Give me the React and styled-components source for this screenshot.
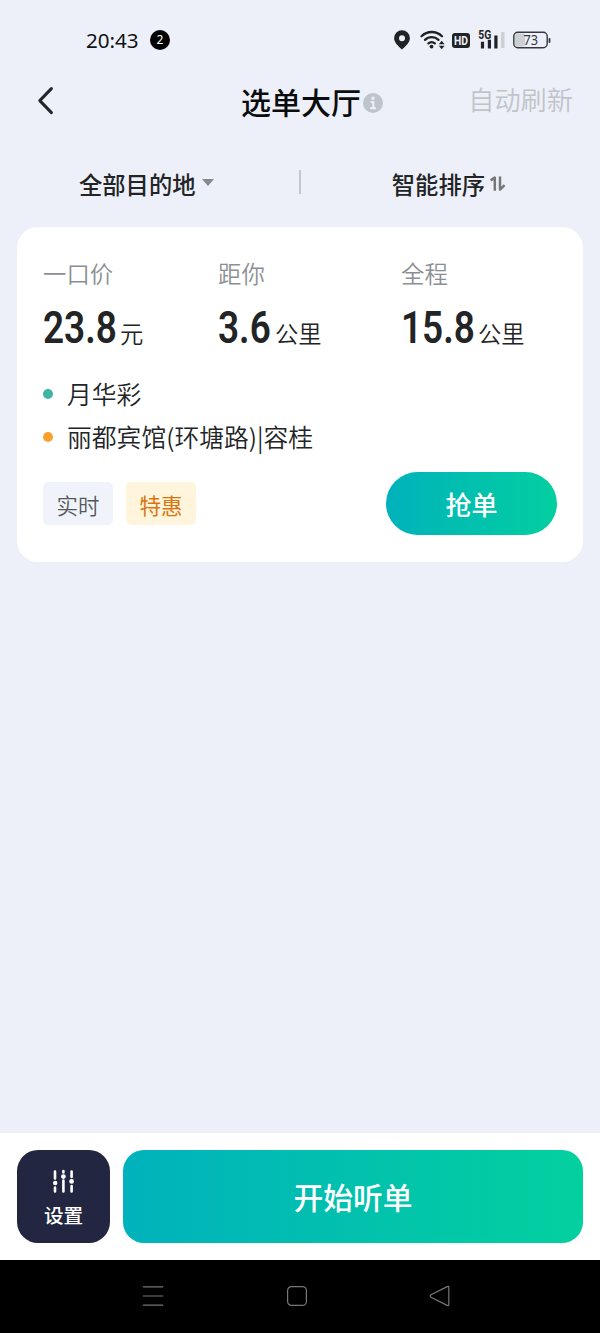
import React from "react";
import styled, { createGlobalStyle } from "styled-components";

const GlobalStyle = createGlobalStyle`
  * {
    box-sizing: border-box;
  }
  body {
    margin: 0;
    background: #edf0f9;
    font-family: "Noto Sans CJK SC", "Noto Sans", sans-serif;
    color: #222426;
  }
  button {
    border: none;
    padding: 0;
    font-family: inherit;
  }
`;

const stats = [
  { label: "一口价", value: "23.8", unit: "元", width: 175, digits: 73 },
  { label: "距你", value: "3.6", unit: "公里", width: 183, digits: 53 },
  { label: "全程", value: "15.8", unit: "公里", width: 156, digits: 73 },
];

const stops = [
  { name: "月华彩", color: "#3eb5a4" },
  { name: "丽都宾馆(环塘路)|容桂", color: "#f9a12b" },
];

const StatusIcons = () => (
  <svg width="160" height="24" viewBox="392 28 160 24">
    <path
      fill="#1f2325"
      fillRule="evenodd"
      d="M402 30.3a7.9 7.9 0 0 0-7.9 7.9c0 4.4 4.2 7.6 7.9 11.4 3.7-3.8 7.9-7 7.9-11.4a7.9 7.9 0 0 0-7.9-7.9zm0 5a3 3 0 1 1 0 6 3 3 0 0 1 0-6z"
    />
    <g fill="none" stroke="#1f2325" strokeWidth="2.3" strokeLinecap="round">
      <path d="M421.5 36.2a14.6 14.6 0 0 1 20.5 0" />
      <path d="M425 39.9a9.6 9.6 0 0 1 13.5 0" />
      <path d="M428.4 43.4a4.8 4.8 0 0 1 6.4 0" />
    </g>
    <circle cx="431.5" cy="46.6" r="1.9" fill="#1f2325" />
    <path
      d="M438.8 44.2l2.9-3.4 2.9 3.4zM438.8 45.8l2.9 3.4 2.9-3.4z"
      fill="#1f2325"
    />
    <rect x="452" y="33" width="18" height="15" rx="3" fill="#1f2325" />
    <text
      x="461"
      y="45"
      fontSize="12.6"
      fontWeight="700"
      fontFamily="Roboto"
      textAnchor="middle"
      textLength="14"
      lengthAdjust="spacingAndGlyphs"
      fill="#edf0f9"
    >
      HD
    </text>
    <path
      d="M482.5 43.4v3.6M489.4 41.4v5.6M495.9 37.2v9.8"
      stroke="#1f2325"
      strokeWidth="3.2"
      strokeLinecap="square"
    />
    <text
      x="478.3"
      y="38.9"
      fontSize="12"
      fontWeight="700"
      fontFamily="Roboto"
      textLength="13"
      lengthAdjust="spacingAndGlyphs"
      fill="#1f2325"
    >
      5G
    </text>
    <rect x="501" y="32" width="3.6" height="16" rx="1" fill="#cdd0d6" />
    <rect x="515" y="33.5" width="10" height="13" rx="2" fill="#cccfd4" />
    <rect
      x="513.8"
      y="32.3"
      width="33.4"
      height="15.4"
      rx="4"
      fill="none"
      stroke="#35393c"
      strokeWidth="1.4"
    />
    <rect x="548.6" y="38" width="1.8" height="5" rx="0.8" fill="#35393c" />
    <text
      x="530.8"
      y="45"
      fontSize="13.8"
      fontFamily="Noto Sans"
      textAnchor="middle"
      textLength="14.6"
      lengthAdjust="spacingAndGlyphs"
      fill="#35393c"
    >
      73
    </text>
  </svg>
);

const BackIcon = () => (
  <svg width="18" height="30" viewBox="0 0 18 30">
    <path
      d="M14.4 2.6L2.8 14.6l11.6 12"
      fill="none"
      stroke="#222628"
      strokeWidth="3"
      strokeLinecap="round"
      strokeLinejoin="round"
    />
  </svg>
);

const InfoIcon = () => (
  <svg width="20" height="20" viewBox="0 0 20 20">
    <circle cx="10" cy="10" r="10" fill="#bdc5cb" />
    <circle cx="10" cy="5.3" r="1.7" fill="#edf0f9" />
    <path
      d="M7.7 8.9h2.6v6M7.2 15.2h5.8"
      fill="none"
      stroke="#edf0f9"
      strokeWidth="2"
    />
  </svg>
);

const SortIcon = () => (
  <svg width="18" height="18" viewBox="0 0 18 18">
    <path
      d="M1.6 5.4L5.8 2.6v13.2M11 1.6v13l4.6-4.4"
      fill="none"
      stroke="#74787b"
      strokeWidth="2.5"
      strokeLinejoin="round"
    />
  </svg>
);

const SlidersIcon = () => (
  <svg width="22" height="24" viewBox="0 0 22 24">
    <path
      d="M2 2.5v7M2 18.5v4M10.4 2v1.5M10.4 11.5v11M18.6 2.5v5.5M18.6 17v5.5"
      stroke="#fff"
      strokeWidth="2.6"
      strokeLinecap="round"
    />
    <circle cx="2.2" cy="14" r="2.2" fill="#fff" />
    <circle cx="10.4" cy="7.6" r="2.4" fill="#fff" />
    <circle cx="18.6" cy="12.4" r="2.4" fill="#fff" />
  </svg>
);

const NavIcon = ({ children }) => (
  <svg
    width="24"
    height="24"
    viewBox="0 0 24 24"
    fill="none"
    stroke="#777"
    strokeWidth="1.2"
    strokeLinejoin="round"
  >
    {children}
  </svg>
);

const App = () => {
  return (
    <Screen>
      <GlobalStyle />
      <StatusBar>
        <Clock>20:43</Clock>
        <Badge>2</Badge>
        <StatusIcons />
      </StatusBar>

      <Header>
        <BackIcon />
        <Title>
          选单大厅
          <InfoIcon />
        </Title>
        <AutoRefresh>自动刷新</AutoRefresh>
      </Header>

      <Filters>
        <Filter>
          全部目的地
          <Caret />
        </Filter>
        <Divider />
        <Filter $sort>
          智能排序
          <SortIcon />
        </Filter>
      </Filters>

      <Card>
        <Stats>
          {stats.map(({ label, value, unit, width, digits }) => (
            <Stat key={label} $width={width}>
              <Label>{label}</Label>
              <Amount>
                <Digits $width={digits}>
                  <Narrow>{value}</Narrow>
                </Digits>
                <Unit>{unit}</Unit>
              </Amount>
            </Stat>
          ))}
        </Stats>
        <Stops>
          {stops.map(({ name, color }) => (
            <Stop key={name}>
              <Dot $color={color} />
              {name}
            </Stop>
          ))}
        </Stops>
        <CardFooter>
          <Tag>实时</Tag>
          <Tag $promo>特惠</Tag>
          <GrabButton>抢单</GrabButton>
        </CardFooter>
      </Card>

      <ActionBar>
        <SettingsButton>
          <SlidersIcon />
          设置
        </SettingsButton>
        <StartButton>开始听单</StartButton>
      </ActionBar>

      <NavBar>
        <NavIcon>
          <path d="M1.8 2.8h20.4M1.8 12h20.4M1.8 21.2h20.4" />
        </NavIcon>
        <NavIcon>
          <rect x="2.6" y="2.6" width="18.8" height="18.8" rx="4" />
        </NavIcon>
        <NavIcon>
          <path d="M20.8 3.4v17.2q0 1.6-1.6.8L3 13.2q-1.6-1.2 0-2.4l16.2-8.2q1.6-.8 1.6.8z" />
        </NavIcon>
      </NavBar>
    </Screen>
  );
};

const Screen = styled.div`
  display: flex;
  flex-direction: column;
  width: 600px;
  height: 1333px;
  overflow: hidden;
  background: #edf0f9;
`;

const StatusBar = styled.div`
  display: flex;
  align-items: center;
  height: 80px;
  padding: 0 48px 0 86px;

  svg {
    margin-left: auto;
  }
`;

const Clock = styled.span`
  width: 64px;
  font-family: "Noto Sans", sans-serif;
  font-size: 20.6px;
  font-weight: 450;
  color: #101213;
`;

const Badge = styled.span`
  width: 20px;
  height: 20px;
  border-radius: 50%;
  background: #000;
  color: #fff;
  font-family: "Noto Sans", sans-serif;
  font-size: 12px;
  line-height: 20px;
  text-align: center;
`;

const Header = styled.div`
  display: grid;
  grid-template-columns: 204px 1fr auto;
  align-items: center;
  height: 42px;
  padding: 0 27px 0 37px;
`;

const Title = styled.div`
  display: flex;
  align-items: center;
  gap: 2px;
  height: 42px;
  font-size: 30px;
  font-weight: 500;
  line-height: 40px;
  color: #0a0c0d;

  svg {
    margin-top: 4px;
  }
`;

const AutoRefresh = styled.span`
  height: 42px;
  font-size: 26.2px;
  font-weight: 350;
  line-height: 39px;
  color: #c0c4c9;
`;

const Filters = styled.div`
  display: flex;
  align-items: center;
  height: 44px;
  margin: 40px 0 21px;
  padding: 0 93px 0 79px;
`;

const Filter = styled.div`
  display: flex;
  align-items: center;
  gap: ${(props) => (props.$sort ? "4px" : "7px")};
  margin-left: ${(props) => (props.$sort ? "auto" : "0")};
  font-size: 23.3px;
  font-weight: 500;
  line-height: 44px;
`;

const Caret = styled.i`
  border: 6px solid transparent;
  border-top: 7px solid #85898c;
  border-bottom: 0;
  margin-top: -4px;
`;

const Divider = styled.i`
  width: 2px;
  height: 24px;
  margin-left: 85px;
  margin-top: -4px;
  background: #c3c6cc;
`;

const Card = styled.div`
  height: 335px;
  margin: 0 17px;
  padding: 28px 26px 0;
  border-radius: 21px;
  background: #fff;
`;

const Stats = styled.div`
  display: flex;
`;

const Stat = styled.div`
  width: ${(props) => props.$width}px;
`;

const Label = styled.div`
  font-size: 23.4px;
  font-weight: 350;
  line-height: 37px;
  color: #8b8f94;
`;

const Amount = styled.div`
  display: flex;
  align-items: baseline;
  gap: 4px;
  height: 66px;
  padding-top: 4px;
  line-height: 66px;
`;

const Digits = styled.span`
  width: ${(props) => props.$width}px;
`;

const Narrow = styled.span`
  display: inline-block;
  font-family: Roboto, sans-serif;
  font-size: 43.5px;
  font-weight: 600;
  transform: scaleX(0.85);
  transform-origin: left;
`;

const Unit = styled.span`
  font-size: 23.3px;
  font-weight: 350;
`;

const Stops = styled.div`
  padding-top: 14px;
`;

const Stop = styled.div`
  display: flex;
  align-items: center;
  gap: 14px;
  height: 43px;
  font-size: 24.8px;
  font-weight: 350;
  line-height: 43px;
`;

const Dot = styled.i`
  width: 10px;
  height: 10px;
  border-radius: 50%;
  background: ${(props) => props.$color};
`;

const CardFooter = styled.div`
  display: flex;
  align-items: center;
  gap: 13px;
  height: 63px;
  margin-top: 14px;
`;

const Tag = styled.span`
  width: 70px;
  height: 43px;
  border-radius: 5px;
  background: ${(props) => (props.$promo ? "#fff4dc" : "#f0f4fa")};
  color: ${(props) => (props.$promo ? "#d9750f" : "#54585c")};
  font-size: 21.5px;
  font-weight: ${(props) => (props.$promo ? 400 : 350)};
  line-height: 45px;
  text-align: center;
`;

const GrabButton = styled.button`
  width: 171px;
  height: 63px;
  margin-left: auto;
  border-radius: 32px;
  background: linear-gradient(90deg, #00b2bb, #03cfa0);
  color: #fff;
  font-size: 26px;
  font-weight: 500;
  line-height: 63px;
`;

const ActionBar = styled.div`
  display: flex;
  gap: 13px;
  height: 127px;
  margin-top: auto;
  padding: 17px;
  background: #fff;
`;

const SettingsButton = styled.button`
  display: flex;
  flex-direction: column;
  align-items: center;
  width: 93px;
  height: 93px;
  padding-top: 19px;
  border-radius: 21px;
  background: #232640;
  color: #fff;
  font-size: 19.6px;
  font-weight: 500;
  line-height: 43px;
`;

const StartButton = styled.button`
  flex: 1;
  height: 93px;
  border-radius: 21px;
  background: linear-gradient(90deg, #00b2bc, #03d09f);
  color: #fff;
  font-size: 29.8px;
  font-weight: 500;
  line-height: 93px;
`;

const NavBar = styled.div`
  display: flex;
  justify-content: space-between;
  height: 73px;
  padding: 24px 148px 0 141px;
  background: #000;
`;

export default App;
